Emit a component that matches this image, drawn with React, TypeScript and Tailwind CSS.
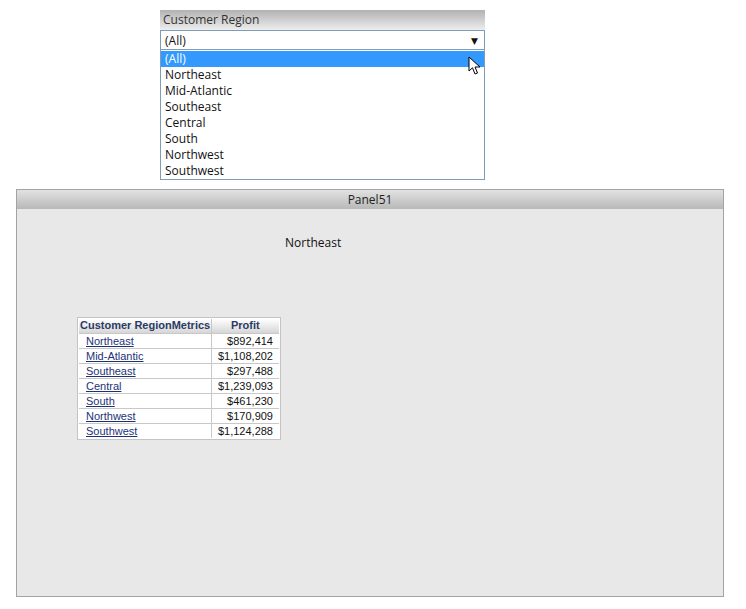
import React from 'react';

const regions = ['(All)', 'Northeast', 'Mid-Atlantic', 'Southeast', 'Central', 'South', 'Northwest', 'Southwest'];

const rows = [
    { name: 'Northeast', profit: '$892,414' },
    { name: 'Mid-Atlantic', profit: '$1,108,202' },
    { name: 'Southeast', profit: '$297,488' },
    { name: 'Central', profit: '$1,239,093' },
    { name: 'South', profit: '$461,230' },
    { name: 'Northwest', profit: '$170,909' },
    { name: 'Southwest', profit: '$1,124,288' },
];

function Cursor() {
    return (
        <svg width="14" height="20" viewBox="0 0 14 20" className="absolute left-[468px] top-[56px]">
            <path d="M1 1 L1 15 L4.5 11.8 L7 18 L9.5 17 L7 11 L12 11 Z" fill="#fff" stroke="#000" strokeWidth="1" strokeLinejoin="round" />
        </svg>
    );
}

export default function App() {
    return (
        <div className="relative w-[746px] h-[609px] bg-white overflow-hidden" style={{ fontFamily: '"Open Sans", "DejaVu Sans", sans-serif' }}>
            {/* Selector */}
            <div className="ml-[160px] pt-[10px] w-[325px]">
                <div className="h-[20px] bg-gradient-to-b from-[#b2b2b2] to-[#eeeeee] px-[3px] text-[12px] leading-[20px] text-[#333]">
                    Customer Region
                </div>
                <div className="h-[20px] border border-[#7f9db9] bg-white flex items-center justify-between pl-[4px] pr-[6px] pt-[1px] text-[12px] text-[#111]">
                    <span>(All)</span>
                    <span className="text-[9px]">▼</span>
                </div>
                <div className="border border-t-0 border-[#7f9db9] bg-white pt-[1px]">
                    {regions.map((r, i) => (
                        <div
                            key={r}
                            className={
                                i === 0
                                    ? 'h-[16px] leading-[16px] pl-[4px] text-[12px] bg-[#3399ff] text-white'
                                    : 'h-[16px] leading-[16px] pl-[4px] text-[12px] text-[#111]'
                            }
                        >
                            {r}
                        </div>
                    ))}
                </div>
            </div>
            <Cursor />

            {/* Panel */}
            <div className="ml-[16px] mt-[9px] w-[708px] h-[408px] border border-[#a3a3a3] bg-[#e8e8e8] flex flex-col">
                <div className="h-[19px] bg-gradient-to-b from-[#e2e2e2] to-[#b8b8b8] text-center text-[12px] leading-[19px] text-[#222]">
                    Panel51
                </div>
                <div className="flex-1">
                    <div className="ml-[268px] mt-[25px] text-[12px] text-[#111]">Northeast</div>
                    <div className="ml-[60px] mt-[65px] inline-block border border-[#c4c4c4] bg-white p-[1px]" style={{ fontFamily: '"Liberation Sans", Arial, sans-serif' }}>
                        <table className="border-collapse text-[11px]">
                            <thead>
                                <tr className="h-[14px] bg-gradient-to-b from-[#ffffff] to-[#d6d6d6] text-[#2a3b66] font-bold leading-[13px]">
                                    <th className="border-r border-[#c8c8c8] pl-[1px] pr-0 text-left font-bold w-[132px] whitespace-nowrap">
                                        Customer RegionMetrics
                                    </th>
                                    <th className="text-center font-bold w-[68px]">Profit</th>
                                </tr>
                            </thead>
                            <tbody>
                                {rows.map((row) => (
                                    <tr key={row.name} className="h-[15px] leading-[14px] border-t border-[#c8c8c8]">
                                        <td className="border-r border-[#c8c8c8] pl-[7px]">
                                            <span className="underline text-[#1c3278]">{row.name}</span>
                                        </td>
                                        <td className="text-right pr-[6px] text-[#111]">{row.profit}</td>
                                    </tr>
                                ))}
                            </tbody>
                        </table>
                    </div>
                </div>
            </div>
        </div>
    );
}
